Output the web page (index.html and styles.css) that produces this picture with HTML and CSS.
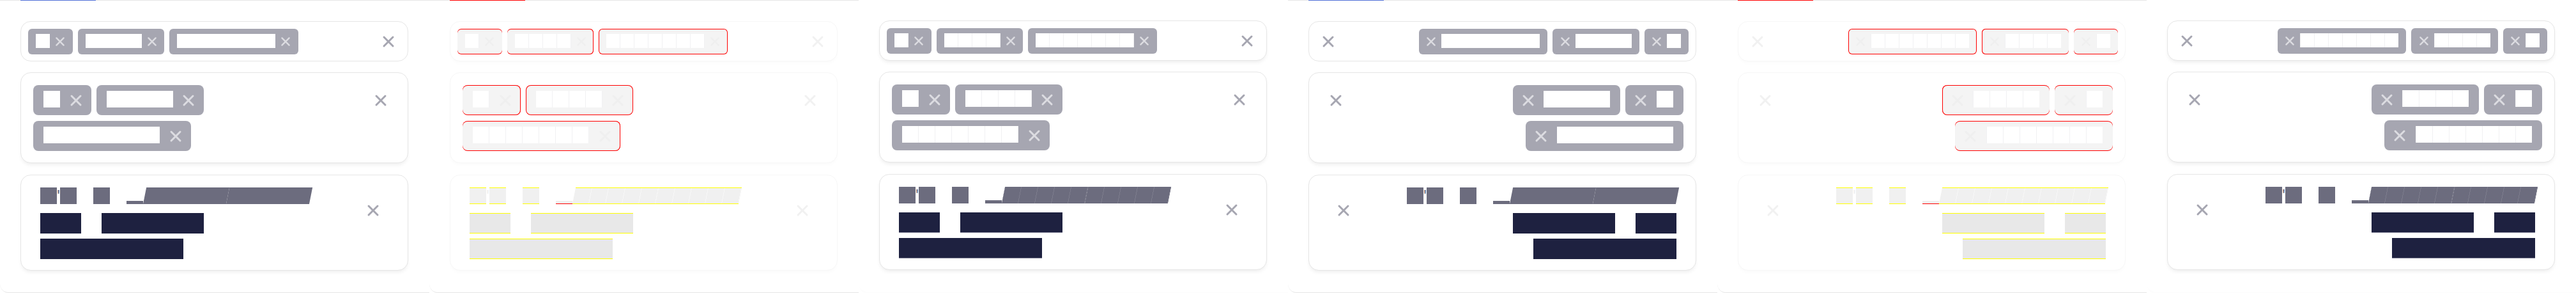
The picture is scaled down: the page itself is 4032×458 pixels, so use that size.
FILE: index.html
```html
<!DOCTYPE html>
<html lang="en">
<head>
<meta charset="utf-8">
<title>Tag field comparison</title>
<link rel="stylesheet" href="styles.css">
</head>
<body>
<main class="strip">

  <!-- Panel 1: LTR expected -->
  <section class="panel framed">
    <div class="tabbar"><span class="tab"></span></div>
    <div class="stack" dir="ltr">
      <div class="field sm flat">
        <ul class="chips">
          <li class="chip"><span class="blk">A</span><svg class="x" viewBox="0 0 20 20"><path d="M3 3L17 17M17 3L3 17"/></svg></li>
          <li class="chip"><span class="blk">Tags</span><svg class="x" viewBox="0 0 20 20"><path d="M3 3L17 17M17 3L3 17"/></svg></li>
          <li class="chip"><span class="blk">Options</span><svg class="x" viewBox="0 0 20 20"><path d="M3 3L17 17M17 3L3 17"/></svg></li>
        </ul>
        <button class="clear"><svg class="x" viewBox="0 0 20 20"><path d="M3 3L17 17M17 3L3 17"/></svg></button>
      </div>
      <div class="field md">
        <ul class="chips">
          <li class="chip"><span class="blk">A</span><svg class="x" viewBox="0 0 20 20"><path d="M3 3L17 17M17 3L3 17"/></svg></li>
          <li class="chip"><span class="blk">Tags</span><svg class="x" viewBox="0 0 20 20"><path d="M3 3L17 17M17 3L3 17"/></svg></li>
          <li class="chip"><span class="blk">Options</span><svg class="x" viewBox="0 0 20 20"><path d="M3 3L17 17M17 3L3 17"/></svg></li>
        </ul>
        <button class="clear"><svg class="x" viewBox="0 0 20 20"><path d="M3 3L17 17M17 3L3 17"/></svg></button>
      </div>
      <div class="field lg">
        <div class="content">
          <p class="label"><span class="blk">I</span><span class="apos">'</span><span class="blk">m</span> <span class="blk">a</span> <span class="blk under">_</span><em class="em"><span class="blk it">multi</span><span class="blk it">label</span></em></p>
          <div class="values"><span class="blk">My</span><span class="blk">value</span><span class="blk">wrapped</span></div>
        </div>
        <button class="clear"><svg class="x" viewBox="0 0 20 20"><path d="M3 3L17 17M17 3L3 17"/></svg></button>
      </div>
    </div>
  </section>

  <!-- Panel 2: LTR diff -->
  <section class="panel framed diff">
    <div class="tabbar"><span class="tab"></span></div>
    <div class="stack" dir="ltr">
      <div class="field sm">
        <ul class="chips">
          <li class="chip"><span class="blk">A</span><svg class="x" viewBox="0 0 20 20"><path d="M3 3L17 17M17 3L3 17"/></svg></li>
          <li class="chip r-end"><span class="blk">Tags</span><svg class="x" viewBox="0 0 20 20"><path d="M3 3L17 17M17 3L3 17"/></svg></li>
          <li class="chip r-both"><span class="blk">Options</span><svg class="x" viewBox="0 0 20 20"><path d="M3 3L17 17M17 3L3 17"/></svg></li>
        </ul>
        <button class="clear"><svg class="x" viewBox="0 0 20 20"><path d="M3 3L17 17M17 3L3 17"/></svg></button>
      </div>
      <div class="field md">
        <ul class="chips">
          <li class="chip r-end"><span class="blk">A</span><svg class="x" viewBox="0 0 20 20"><path d="M3 3L17 17M17 3L3 17"/></svg></li>
          <li class="chip r-both"><span class="blk">Tags</span><svg class="x" viewBox="0 0 20 20"><path d="M3 3L17 17M17 3L3 17"/></svg></li>
          <li class="chip r-end"><span class="blk">Options</span><svg class="x" viewBox="0 0 20 20"><path d="M3 3L17 17M17 3L3 17"/></svg></li>
        </ul>
        <button class="clear"><svg class="x" viewBox="0 0 20 20"><path d="M3 3L17 17M17 3L3 17"/></svg></button>
      </div>
      <div class="field lg">
        <div class="content">
          <p class="label"><span class="blk">I</span><span class="apos">'</span><span class="blk">m</span> <span class="blk">a</span> <span class="blk under">_</span><em class="em"><span class="blk it">multi</span><span class="blk it">label</span></em></p>
          <div class="values"><span class="blk">My</span><span class="blk">value</span><span class="blk">wrapped</span></div>
        </div>
        <button class="clear"><svg class="x" viewBox="0 0 20 20"><path d="M3 3L17 17M17 3L3 17"/></svg></button>
      </div>
    </div>
  </section>

  <!-- Panel 3: LTR actual -->
  <section class="panel soft">
    <div class="stack" dir="ltr">
      <div class="field sm">
        <ul class="chips">
          <li class="chip"><span class="blk">A</span><svg class="x" viewBox="0 0 20 20"><path d="M3 3L17 17M17 3L3 17"/></svg></li>
          <li class="chip"><span class="blk">Tags</span><svg class="x" viewBox="0 0 20 20"><path d="M3 3L17 17M17 3L3 17"/></svg></li>
          <li class="chip"><span class="blk">Options</span><svg class="x" viewBox="0 0 20 20"><path d="M3 3L17 17M17 3L3 17"/></svg></li>
        </ul>
        <button class="clear"><svg class="x" viewBox="0 0 20 20"><path d="M3 3L17 17M17 3L3 17"/></svg></button>
      </div>
      <div class="field md">
        <ul class="chips">
          <li class="chip"><span class="blk">A</span><svg class="x" viewBox="0 0 20 20"><path d="M3 3L17 17M17 3L3 17"/></svg></li>
          <li class="chip"><span class="blk">Tags</span><svg class="x" viewBox="0 0 20 20"><path d="M3 3L17 17M17 3L3 17"/></svg></li>
          <li class="chip"><span class="blk">Options</span><svg class="x" viewBox="0 0 20 20"><path d="M3 3L17 17M17 3L3 17"/></svg></li>
        </ul>
        <button class="clear"><svg class="x" viewBox="0 0 20 20"><path d="M3 3L17 17M17 3L3 17"/></svg></button>
      </div>
      <div class="field lg">
        <div class="content">
          <p class="label"><span class="blk">I</span><span class="apos">'</span><span class="blk">m</span> <span class="blk">a</span> <span class="blk under">_</span><em class="em"><span class="blk it">multi</span><span class="blk it">label</span></em></p>
          <div class="values"><span class="blk">My</span><span class="blk">value</span><span class="blk">wrapped</span></div>
        </div>
        <button class="clear"><svg class="x" viewBox="0 0 20 20"><path d="M3 3L17 17M17 3L3 17"/></svg></button>
      </div>
    </div>
  </section>

  <!-- Panel 4: RTL expected -->
  <section class="panel framed">
    <div class="tabbar"><span class="tab"></span></div>
    <div class="stack" dir="rtl">
      <div class="field sm flat">
        <ul class="chips">
          <li class="chip"><span class="blk">A</span><svg class="x" viewBox="0 0 20 20"><path d="M3 3L17 17M17 3L3 17"/></svg></li>
          <li class="chip"><span class="blk">Tags</span><svg class="x" viewBox="0 0 20 20"><path d="M3 3L17 17M17 3L3 17"/></svg></li>
          <li class="chip"><span class="blk">Options</span><svg class="x" viewBox="0 0 20 20"><path d="M3 3L17 17M17 3L3 17"/></svg></li>
        </ul>
        <button class="clear"><svg class="x" viewBox="0 0 20 20"><path d="M3 3L17 17M17 3L3 17"/></svg></button>
      </div>
      <div class="field md">
        <ul class="chips">
          <li class="chip"><span class="blk">A</span><svg class="x" viewBox="0 0 20 20"><path d="M3 3L17 17M17 3L3 17"/></svg></li>
          <li class="chip"><span class="blk">Tags</span><svg class="x" viewBox="0 0 20 20"><path d="M3 3L17 17M17 3L3 17"/></svg></li>
          <li class="chip"><span class="blk">Options</span><svg class="x" viewBox="0 0 20 20"><path d="M3 3L17 17M17 3L3 17"/></svg></li>
        </ul>
        <button class="clear"><svg class="x" viewBox="0 0 20 20"><path d="M3 3L17 17M17 3L3 17"/></svg></button>
      </div>
      <div class="field lg">
        <div class="content">
          <p class="label"><span class="blk">I</span><span class="apos">'</span><span class="blk">m</span> <span class="blk">a</span> <span class="blk under">_</span><em class="em"><span class="blk it">multi</span><span class="blk it">label</span></em></p>
          <div class="values"><span class="blk">My</span><span class="blk">value</span><span class="blk">wrapped</span></div>
        </div>
        <button class="clear"><svg class="x" viewBox="0 0 20 20"><path d="M3 3L17 17M17 3L3 17"/></svg></button>
      </div>
    </div>
  </section>

  <!-- Panel 5: RTL diff -->
  <section class="panel framed diff">
    <div class="tabbar"><span class="tab"></span></div>
    <div class="stack" dir="rtl">
      <div class="field sm">
        <ul class="chips">
          <li class="chip"><span class="blk">A</span><svg class="x" viewBox="0 0 20 20"><path d="M3 3L17 17M17 3L3 17"/></svg></li>
          <li class="chip r-end"><span class="blk">Tags</span><svg class="x" viewBox="0 0 20 20"><path d="M3 3L17 17M17 3L3 17"/></svg></li>
          <li class="chip r-both"><span class="blk">Options</span><svg class="x" viewBox="0 0 20 20"><path d="M3 3L17 17M17 3L3 17"/></svg></li>
        </ul>
        <button class="clear"><svg class="x" viewBox="0 0 20 20"><path d="M3 3L17 17M17 3L3 17"/></svg></button>
      </div>
      <div class="field md">
        <ul class="chips">
          <li class="chip"><span class="blk">A</span><svg class="x" viewBox="0 0 20 20"><path d="M3 3L17 17M17 3L3 17"/></svg></li>
          <li class="chip r-end"><span class="blk">Tags</span><svg class="x" viewBox="0 0 20 20"><path d="M3 3L17 17M17 3L3 17"/></svg></li>
          <li class="chip"><span class="blk">Options</span><svg class="x" viewBox="0 0 20 20"><path d="M3 3L17 17M17 3L3 17"/></svg></li>
        </ul>
        <button class="clear"><svg class="x" viewBox="0 0 20 20"><path d="M3 3L17 17M17 3L3 17"/></svg></button>
      </div>
      <div class="field lg">
        <div class="content">
          <p class="label"><span class="blk">I</span><span class="apos">'</span><span class="blk">m</span> <span class="blk">a</span> <span class="blk under">_</span><em class="em"><span class="blk it">multi</span><span class="blk it">label</span></em></p>
          <div class="values"><span class="blk">My</span><span class="blk">value</span><span class="blk">wrapped</span></div>
        </div>
        <button class="clear"><svg class="x" viewBox="0 0 20 20"><path d="M3 3L17 17M17 3L3 17"/></svg></button>
      </div>
    </div>
  </section>

  <!-- Panel 6: RTL actual -->
  <section class="panel soft">
    <div class="stack" dir="rtl">
      <div class="field sm">
        <ul class="chips">
          <li class="chip"><span class="blk">A</span><svg class="x" viewBox="0 0 20 20"><path d="M3 3L17 17M17 3L3 17"/></svg></li>
          <li class="chip"><span class="blk">Tags</span><svg class="x" viewBox="0 0 20 20"><path d="M3 3L17 17M17 3L3 17"/></svg></li>
          <li class="chip"><span class="blk">Options</span><svg class="x" viewBox="0 0 20 20"><path d="M3 3L17 17M17 3L3 17"/></svg></li>
        </ul>
        <button class="clear"><svg class="x" viewBox="0 0 20 20"><path d="M3 3L17 17M17 3L3 17"/></svg></button>
      </div>
      <div class="field md">
        <ul class="chips">
          <li class="chip"><span class="blk">A</span><svg class="x" viewBox="0 0 20 20"><path d="M3 3L17 17M17 3L3 17"/></svg></li>
          <li class="chip"><span class="blk">Tags</span><svg class="x" viewBox="0 0 20 20"><path d="M3 3L17 17M17 3L3 17"/></svg></li>
          <li class="chip"><span class="blk">Options</span><svg class="x" viewBox="0 0 20 20"><path d="M3 3L17 17M17 3L3 17"/></svg></li>
        </ul>
        <button class="clear"><svg class="x" viewBox="0 0 20 20"><path d="M3 3L17 17M17 3L3 17"/></svg></button>
      </div>
      <div class="field lg">
        <div class="content">
          <p class="label"><span class="blk">I</span><span class="apos">'</span><span class="blk">m</span> <span class="blk">a</span> <span class="blk under">_</span><em class="em"><span class="blk it">multi</span><span class="blk it">label</span></em></p>
          <div class="values"><span class="blk">My</span><span class="blk">value</span><span class="blk">wrapped</span></div>
        </div>
        <button class="clear"><svg class="x" viewBox="0 0 20 20"><path d="M3 3L17 17M17 3L3 17"/></svg></button>
      </div>
    </div>
  </section>

</main>
</body>
</html>
```

FILE: styles.css
```css
* { box-sizing: border-box; }

html, body {
  margin: 0;
  padding: 0;
  background: #ffffff;
}

body {
  font-family: "Liberation Sans", Arial, sans-serif;
}

.strip {
  display: flex;
  width: 4032px;
  height: 458px;
  overflow: hidden;
}

/* ---------- panels ---------- */
.panel {
  flex: none;
  width: 672px;
  height: 458px;
  display: flex;
  flex-direction: column;
  background: #ffffff;
}

.panel.framed {
  border-bottom: 1px solid #e6e6e6;
  border-bottom-left-radius: 14px;
}

.panel.soft {
  border-bottom-left-radius: 14px;
  box-shadow: inset 0 -2px 3px -2px rgba(0, 0, 0, 0.04);
}

.tabbar {
  flex: none;
  height: 1px;
  background: #e5e5e5;
}

.tab {
  display: block;
  width: 118px;
  height: 1px;
  margin-left: 32px;
  background: #4f6fd8;
}

.diff .tab { background: #ff0000; }

.stack {
  display: flex;
  flex-direction: column;
  padding: 32px 33px 0 32px;
}

/* ---------- fields ---------- */
.field {
  display: flex;
  align-items: flex-start;
  background: #ffffff;
  border: 1px solid #e6e6e6;
  border-radius: 16px;
  box-shadow: 0 4px 6px -2px rgba(0, 0, 0, 0.08);
}

.field.flat { box-shadow: none; }

.field.sm {
  padding: 11px 0 10px;
  padding-inline: 11px 20px;
}

.field.md {
  margin-top: 17px;
  padding: 19px 0 18px;
  padding-inline: 19px 32px;
}

.field.lg {
  margin-top: 18px;
  padding: 19px 0 17px;
  padding-inline: 30px 44px;
}

/* ---------- chips ---------- */
.chips {
  flex: 1;
  min-width: 0;
  display: flex;
  flex-wrap: wrap;
  gap: 8px;
  list-style: none;
  margin: 0;
  padding: 0;
}

.md .chips { gap: 9px 8px; }

.chip {
  display: flex;
  align-items: center;
  background: #a6a6b1;
  color: #dcdce1;
}

.sm .chip {
  height: 40px;
  border-radius: 6px;
  padding-inline: 12px 11.5px;
  gap: 8px;
}

.md .chip {
  height: 47px;
  border-radius: 8px;
  padding-inline: 16px 14px;
  gap: 14.5px;
}

/* text rendered as solid glyph blocks: each glyph cell is a square */
.blk {
  display: inline-block;
  font-family: "Liberation Mono", monospace;
  font-style: normal;
  color: transparent;
  white-space: nowrap;
  vertical-align: top;
}

.sm .chip .blk {
  font-size: 17.6px;
  letter-spacing: 11.44px;
  height: 22px;
  line-height: 22px;
  margin-bottom: 2px;
  background: #ffffff;
}

.md .chip .blk {
  font-size: 20.8px;
  letter-spacing: 13.52px;
  height: 26px;
  line-height: 26px;
  margin-bottom: 4px;
  background: #ffffff;
}

.x {
  display: block;
  flex: none;
  fill: none;
  stroke: currentColor;
  stroke-width: 3;
  stroke-linecap: round;
}

.sm .chip .x { width: 16px; height: 16px; }
.md .chip .x { width: 20px; height: 20px; }

/* ---------- clear button ---------- */
.clear {
  flex: none;
  display: flex;
  align-items: center;
  justify-content: center;
  margin: 0;
  margin-inline-start: 16px;
  padding: 0;
  border: 0;
  background: none;
  color: #a6a6b1;
}

.clear .x { width: 20px; height: 20px; }

.sm .clear { height: 40px; }
.md .clear { height: 47px; }
.lg .clear { height: 20px; margin-top: 26px; }

/* ---------- large content ---------- */
.content {
  flex: 1;
  min-width: 0;
}

.label {
  margin: 0;
  direction: ltr;
  text-align: left;
  height: 26px;
  font-family: "Liberation Mono", monospace;
  font-size: 20.8px;
  letter-spacing: 13.52px;
  line-height: 26px;
  white-space: nowrap;
}

[dir="rtl"] .label { text-align: right; }

.label .blk {
  font-size: 20.8px;
  letter-spacing: 13.52px;
  height: 26px;
  line-height: 26px;
  background: #6c6c7e;
}

.label .under {
  background: linear-gradient(#6c6c7e, #6c6c7e) left bottom / 100% 5px no-repeat;
}

.label .em {
  font-style: normal;
  display: inline-block;
  vertical-align: top;
  margin-left: 1px;
  letter-spacing: 0;
}

.label .it {
  transform: skewX(-11.3deg);
  transform-origin: 0 80%;
}

.apos {
  display: inline-block;
  vertical-align: top;
  width: 5px;
  font-family: "Liberation Sans", Arial, sans-serif;
  font-size: 26px;
  letter-spacing: 0;
  line-height: 26px;
  color: #6c6c7e;
}

.values {
  display: flex;
  flex-wrap: wrap;
  gap: 8px 32px;
  margin-top: 14px;
}

.values .blk {
  font-size: 25.6px;
  letter-spacing: 16.64px;
  height: 32px;
  line-height: 32px;
  background: #1e2140;
}

/* faint seams between glyph cells in the rendered (actual) panels */
.soft .chip .blk,
.diff .chip .blk {
  background-image: repeating-linear-gradient(to right, transparent 0 21px, #f1f1f3 21px 22px);
}

.soft [dir="rtl"] .chip .blk,
.diff [dir="rtl"] .chip .blk {
  background-image: repeating-linear-gradient(to left, transparent 0 21px, #f1f1f3 21px 22px);
}

.soft .md .chip .blk,
.diff .md .chip .blk {
  background-image: repeating-linear-gradient(to right, transparent 0 25px, #f1f1f3 25px 26px);
}

.soft [dir="rtl"] .md .chip .blk,
.diff [dir="rtl"] .md .chip .blk {
  background-image: repeating-linear-gradient(to left, transparent 0 25px, #f1f1f3 25px 26px);
}

.soft .label .it {
  background-image: repeating-linear-gradient(to right, transparent 0 25px, #7c7c8c 25px 26px);
}

.soft .values .blk {
  box-shadow: inset 0 -1px 0 #8f90a3;
}

/* ---------- diff panels ---------- */
.diff .field {
  border-color: #f7f7f7;
  box-shadow: 0 4px 6px -2px rgba(0, 0, 0, 0.025);
}

.diff .chip {
  background: #f4f4f4;
  color: #efefef;
  box-shadow: inset 0 1px 0 #ff0000, inset 0 -1px 0 #ff0000;
}

.diff .chip.r-end {
  box-shadow: inset 0 1px 0 #ff0000, inset 0 -1px 0 #ff0000, inset -1px 0 0 #ff0000;
}

.diff [dir="rtl"] .chip.r-end {
  box-shadow: inset 0 1px 0 #ff0000, inset 0 -1px 0 #ff0000, inset 1px 0 0 #ff0000;
}

.diff .chip.r-both {
  box-shadow: inset 0 0 0 1px #ff0000;
}

.diff .clear { color: #f1f1f1; }

.diff .label .blk {
  background-color: #f0f0f0;
  box-shadow: inset 0 1px 0 #ffff00, inset 0 -1px 0 #ffff00;
}

.diff .label .it {
  background-image: repeating-linear-gradient(to right, transparent 0 25px, #f7f7f7 25px 26px);
}

.diff .label .under {
  background: linear-gradient(#ff0000, #ff0000) left bottom / 100% 1px no-repeat,
              linear-gradient(#f0f0f0, #f0f0f0) left bottom / 100% 5px no-repeat;
  box-shadow: none;
}

.diff .apos { color: #f0f0f0; }

.diff .values .blk {
  background: #e8e8e8;
  box-shadow: inset 0 1px 0 #ffff00, inset 0 -1px 0 #ffff00;
}
```
